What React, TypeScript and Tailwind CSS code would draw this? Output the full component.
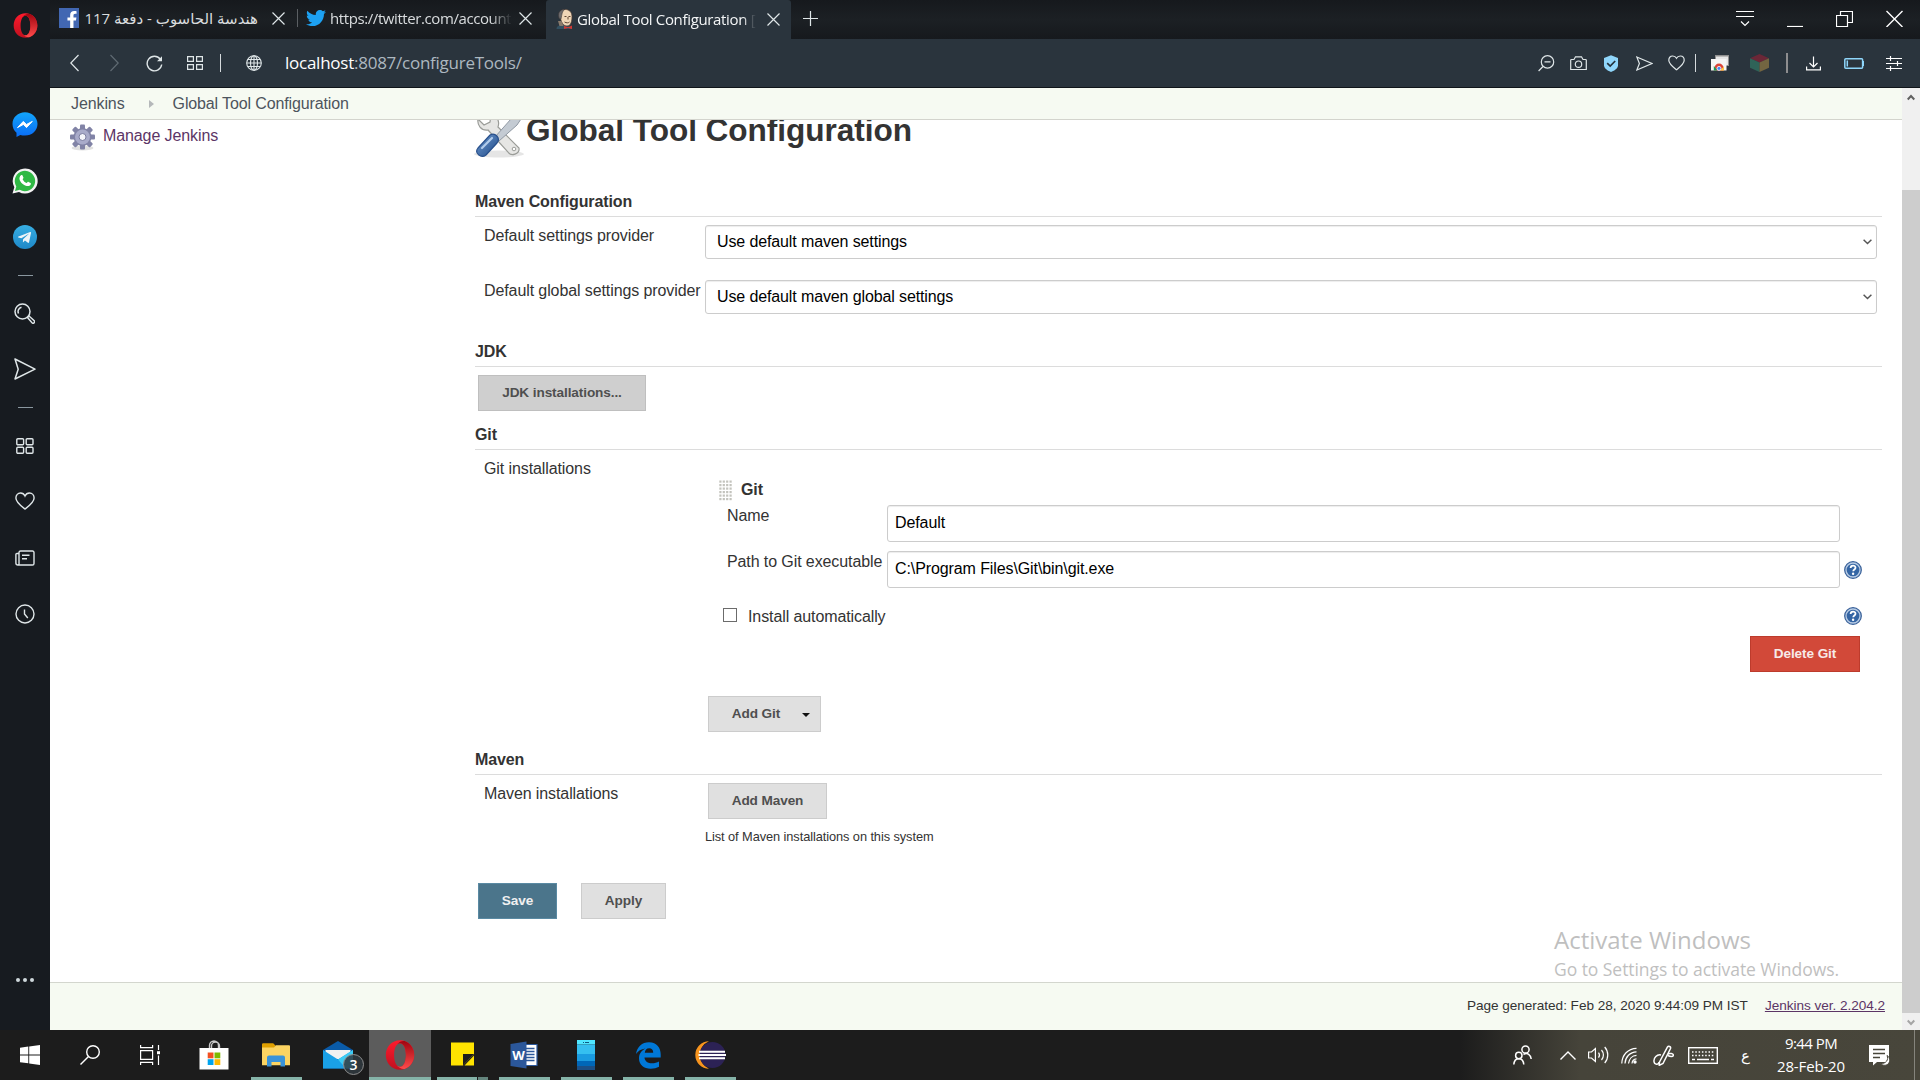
import React from "react";
import { FaTwitter, FaFacebookF, FaTelegramPlane } from "react-icons/fa";

type SvgProps = {
  w: number;
  h: number;
  className?: string;
  stroke?: string;
  sw?: number;
  children: React.ReactNode;
};

/* Line-icon frame: one viewBox unit equals one pixel. */
function Svg({ w, h, className = "", stroke = "#dfe6e8", sw = 1.2, children }: SvgProps) {
  return (
    <svg
      width={w}
      height={h}
      viewBox={`0 0 ${w} ${h}`}
      fill="none"
      stroke={stroke}
      strokeWidth={sw}
      className={`block shrink-0 ${className}`}
    >
      {children}
    </svg>
  );
}

function OperaLogo({ size, id }: { size: number; id: string }) {
  return (
    <svg width={size} height={size} viewBox="0 0 30 30" className="block shrink-0">
      <defs>
        <linearGradient id={`${id}-a`} x1="0" y1="0" x2="0" y2="1">
          <stop offset="0" stopColor="#ff1b2d" />
          <stop offset="1" stopColor="#c0101f" />
        </linearGradient>
        <linearGradient id={`${id}-b`} x1="0" y1="0" x2="0" y2="1">
          <stop offset="0" stopColor="#a0040f" />
          <stop offset="1" stopColor="#ff4b4b" />
        </linearGradient>
      </defs>
      <path
        fill={`url(#${id}-a)`}
        fillRule="evenodd"
        d="M15 0.3C6.8 0.3 0.8 6.8 0.8 15S6.8 29.7 15 29.7 29.2 23.2 29.2 15 23.2 0.3 15 0.3ZM15 3.2c3.6 0 5.9 5 5.9 11.8S18.6 26.8 15 26.8 9.1 21.8 9.1 15 11.400 3.200 15 3.200Z"
      />
      <path
        fill={`url(#${id}-b)`}
        d="M12 4.200c1-.8 2-1 3-1 3.600 0 5.900 5 5.900 11.800S18.600 26.800 15 26.800c-1 0-2-.3-3-1 2.200 2.200 4.800 3.500 7.600 3.200 5.500-1.900 9.600-7.400 9.600-14S25.100 2.900 19.600 1c-2.800-.3-5.400 1-7.600 3.200Z"
      />
    </svg>
  );
}

function CloseX({ className = "" }: { className?: string }) {
  return (
    <Svg w={13} h={13} className={className}>
      <path d="M.5.5l12 12M12.500.5l-12 12" />
    </Svg>
  );
}

function TabStrip() {
  return (
    <div className="flex h-[39px] shrink-0 items-start bg-gradient-to-b from-[#16191d] via-[#1c2024] to-[#16191d] text-[15px] leading-5 text-[#d9dcde]">
      <div className="flex h-8 w-[247px] items-center pt-1 pl-[9px]">
        <span className="flex h-5 w-5 items-end justify-center bg-[#4267b2]">
          <FaFacebookF size={17} color="#fff" className="ml-1.5" />
        </span>
        <span dir="rtl" className="ml-1 w-[175px] whitespace-nowrap">
          هندسة الحاسوب - دفعة 117
        </span>
        <CloseX className="ml-[14px]" />
      </div>
      <div className="mt-[9px] h-[18px] w-px bg-[#5b5f63]" />
      <div className="flex h-8 w-[248px] items-center pt-1 pl-[8px]">
        <FaTwitter size={20} color="#1da1f2" className="shrink-0" />
        <span className="ml-1 w-[182px] overflow-hidden whitespace-nowrap tracking-[-0.41px] [mask-image:linear-gradient(90deg,#000_88%,transparent)]">
          https://twitter.com/account
        </span>
        <CloseX className="ml-[7px]" />
      </div>
      <div className="flex h-[39px] w-[245px] items-start rounded-t-[3px] bg-[#2a343d] pt-2 pl-[10px] text-[#f3f5f6]">
        <svg width="18" height="22" viewBox="0 0 18 22" className="block shrink-0">
          <path d="M.5 21c0-3 3-4 5.500-4l6 .5 4.500 3.500Z" fill="#335061" />
          <path d="M4 8C3 3 6 1.500 9.500 1.500S16 4 16 8.500 15 18 11 18 5 14 4 8Z" fill="#f0d6b7" stroke="#4a3a30" strokeWidth=".7" />
          <path d="M3.500 11C1 6 3 1.500 9 1.200 6 3 6 6 5 11Z" fill="#6d6b6d" stroke="#3a3636" strokeWidth=".6" />
          <path d="M2 13h3.500l2 5H3.500Z" fill="#8a7a6c" />
          <path d="M8.500 8.500h2M12.500 8.500h2M12 9v2.500M8.500 14c2 1.200 4 1 5 0" stroke="#5c4433" fill="none" />
          <path d="M8 18l4 1.200L16 17.500v3.500l-4-1-4 1Z" fill="#d33833" />
        </svg>
        <span className="ml-[3px] w-[180px] overflow-hidden whitespace-nowrap pt-[0.500px] tracking-[-0.34px] [mask-image:linear-gradient(90deg,#000_92%,transparent_100%)]">
          Global Tool Configuration <span className="opacity-60">[</span>
        </span>
        <CloseX className="mt-[5px] ml-[10px]" />
      </div>
      <Svg w={15} h={15} className="mt-[11px] ml-3">
        <path d="M7.500 0v15M0 7.500h15" />
      </Svg>
      <div className="mt-[10px] mr-[17px] ml-auto flex items-start">
        <Svg w={18} h={17} stroke="#fff">
          <path d="M0 1.500h18M0 6.500h18M5 11.500l4 4 4-4" />
        </Svg>
        <Svg w={16} h={17} stroke="#fff" className="ml-[33px]">
          <path d="M0 16.500h16" />
        </Svg>
        <Svg w={17} h={17} stroke="#fff" className="ml-[33px]">
          <path d="M.5 5.500h11v11H.5ZM4.500 5.500V1.500h12v11h-5" />
        </Svg>
        <Svg w={17} h={17} stroke="#fff" className="ml-[33px]" sw={1.400}>
          <path d="M.5 1l16 16M16.500 1l-16 16" />
        </Svg>
      </div>
    </div>
  );
}

function Toolbar() {
  return (
    <div className="flex h-[49px] shrink-0 items-center border-b border-[#10151a] bg-[#2a343d]">
      <Svg w={9} h={18} className="ml-5">
        <path d="M8.500 1L.8 9l7.700 8" />
      </Svg>
      <Svg w={9} h={18} className="ml-[31px]" stroke="#5f6a72">
        <path d="M.5 1l7.700 8L.5 17" />
      </Svg>
      <Svg w={17} h={17} className="ml-[27px]" sw={1.400}>
        <path d="M14.200 4A7.300 7.300 0 1 0 15.700 9.500" />
        <path d="M16 1.200v5h-5Z" fill="#dfe6e8" stroke="none" />
      </Svg>
      <Svg w={16} h={14} className="ml-[24px]">
        <path d="M.6.6h5.800v4.800H.6ZM9.600.6h5.800v4.800H9.600ZM.6 8.600h5.800v4.800H.6ZM9.600 8.600h5.800v4.800H9.600Z" />
      </Svg>
      <div className="ml-[17px] h-[18px] w-px bg-[#d5dadd]" />
      <Svg w={16} h={16} className="ml-[25px]" sw={1.100}>
        <circle cx="8" cy="8" r="7.300" />
        <ellipse cx="8" cy="8" rx="3.500" ry="7.300" />
        <path d="M.7 8h14.600M1.800 4.500h12.400M1.800 11.500h12.400M8 .7v14.600" />
      </Svg>
      <div className="ml-[23px] text-[17px] tracking-[-0.25px] whitespace-nowrap text-[#adb8c0]">
        <span className="text-white">localhost</span>:8087/configureTools/
      </div>
      <div className="mr-[18px] ml-auto flex items-center">
        <Svg w={17} h={17}>
          <circle cx="9.500" cy="6.900" r="6.200" />
          <path d="M6.500 6.900h6M5 11.500L.6 16" />
        </Svg>
        <Svg w={17} h={15} className="ml-[15px]">
          <path d="M1.500 3.500H4l1.500-2.700h6L13 3.500h2.500a.8.8 0 0 1 .8.8v9.200H.7V4.300a.8.800 0 0 1 .8-.8Z" />
          <circle cx="8.500" cy="8.200" r="3.200" />
        </Svg>
        <Svg w={14} h={17} className="ml-[17px]" stroke="none">
          <path d="M7 .3L14 3v7.500c0 3-4.500 5.700-7 6.500-2.500-.8-7-3.500-7-6.500V3Z" fill="#8fd6fb" />
          <path d="M3.200 8.200L6.200 11l5-5" stroke="#22303a" strokeWidth="1.700" />
        </Svg>
        <Svg w={17} h={15} className="ml-[18px]">
          <path d="M.8 1l15.200 6.500L.8 14l2.600-6.500Z" />
        </Svg>
        <Svg w={17} h={16} className="ml-[15px]">
          <path d="M8.500 14.800C5 12 .8 8.800.8 5.200.8 2.600 2.500 1 4.700 1c1.600 0 3 .8 3.800 2.300C9.300 1.800 10.700 1 12.300 1c2.200 0 3.900 1.600 3.900 4.200 0 3.600-4.200 6.800-7.700 9.600Z" />
        </Svg>
        <div className="ml-[10px] h-[18px] w-px bg-[#d5dadd]" />
        <Svg w={18} h={16} className="ml-[15px]" stroke="none">
          <path d="M4 0h14v11h-3V4H4Z" fill="#8f8f8f" />
          <path d="M5 1.500h12v8.500h-2V4H5Z" fill="#e6e6e6" />
          <path d="M0 4h15.500v11.500H0Z" fill="#f4f4f4" />
          <path d="M3.300 13.200a4.700 4.700 0 0 1 9.400 0v2.300H3.300Z" fill="#db4437" />
          <path d="M2.800 11l3.500 4.500H2.800Z" fill="#0f9d58" />
          <path d="M12.900 11.500v4H9Z" fill="#ffcd40" />
          <circle cx="8" cy="13.400" r="2" fill="#4285f4" stroke="#fff" strokeWidth=".8" />
        </Svg>
        <Svg w={19} h={18} className="ml-[21px]" stroke="none">
          <path d="M9.500 0L19 4.200 9.500 8.500 0 4.200Z" fill="#6b2737" />
          <path d="M0 4.200l9.500 4.300V18L0 13.800Z" fill="#2f6358" />
          <path d="M19 4.200L9.500 8.500V18l9.500-4.200Z" fill="#736541" />
        </Svg>
        <div className="ml-[17px] h-5 w-0.5 bg-[#8d8d8f]" />
        <Svg w={15} h={15} className="ml-[18px]" stroke="#fff">
          <path d="M7.500.5v10M3.500 7l4 4 4-4M.6 10.500v3.400h13.800v-3.400" />
        </Svg>
        <Svg w={20} h={11} className="ml-[23px]" stroke="#8fd6fb" sw={1.500}>
          <rect x=".8" y=".8" width="17.800" height="9.400" rx="1" />
          <path d="M3.300 2.500v6M19.300 3v5" />
        </Svg>
        <Svg w={16} h={15} className="ml-[22px]" stroke="#fff">
          <path d="M0 2.500h16M0 7.500h16M0 12.500h16M4.500 0v5M11.500 5v5M4.500 10v5" />
        </Svg>
      </div>
    </div>
  );
}

function OperaSidebar() {
  return (
    <aside className="flex w-[50px] shrink-0 flex-col items-center bg-[#171b20]">
      <div className="mt-[13px]">
        <OperaLogo size={25} id="side" />
      </div>
      <svg width="26" height="26" viewBox="0 0 26 26" className="mt-[74px] block">
        <defs>
          <linearGradient id="msg" x1="0" y1="0" x2="0" y2="1">
            <stop offset="0" stopColor="#12a5fb" />
            <stop offset="1" stopColor="#0a6cf5" />
          </linearGradient>
        </defs>
        <path d="M13 .3C5.900.3.500 5.400.500 12c0 3.600 1.500 6.700 4 8.800V25l3.800-2c1.500.4 3 .6 4.700.6 7.100 0 12.500-5.100 12.500-11.600S20.100.3 13 .3Z" fill="url(#msg)" />
        <path d="M5.500 15.600L11.300 9.400l3.100 3.100 5.900-3.100-5.800 6.200-3.100-3.200Z" fill="#fff" stroke="#fff" strokeWidth="1" />
      </svg>
      <svg width="26" height="26" viewBox="0 0 26 26" className="mt-[30px] block">
        <path d="M.5 25.600l1.800-6.400A12.500 12.500 0 1 1 7 23.900Z" fill="#f3f3f3" />
        <path d="M3 23l1.300-4.600A10.200 10.200 0 1 1 7.800 21.800Z" fill="#2fb944" />
        <path d="M9 7.300c.5-.4 1.200-.4 1.500.2l.9 2c.2.4 0 .8-.8 1.700 1 2 2.300 3.100 4.200 3.900.9-1.200 1.200-1.400 1.700-1.200l2 1c.5.300.5.700.2 1.500-.5 1.400-2.600 2-4 1.600-4.400-1.200-6.200-3.900-7-5.900-.7-2 .1-4 1.300-4.800Z" fill="#fff" />
      </svg>
      <div className="mt-[31px] flex h-6 w-6 items-center justify-center rounded-full bg-gradient-to-b from-[#37aee2] to-[#1e88c8]">
        <FaTelegramPlane size={15} color="#eef4f8" className="mr-0.5" />
      </div>
      <div className="mt-[26px] h-px w-[15px] bg-[#8a979f]" />
      <Svg w={21} h={21} className="mt-[27px] mr-px" sw={1.500}>
        <circle cx="8.500" cy="8.500" r="7.500" />
        <path d="M4.500 10.500a4.500 4.500 0 0 1 3-6.300M13.500 14.500l1.500-1.500 5 4.500a1.500 1.500 0 0 1-2 2.300Z" />
      </Svg>
      <Svg w={22} h={22} className="mt-[34px]" sw={1.500}>
        <path d="M1 1l20 10.200L1 21l3.200-9.800Z" strokeLinejoin="round" />
      </Svg>
      <div className="mt-[27px] h-px w-[15px] bg-[#8a979f]" />
      <Svg w={18} h={16} className="mt-[30px] mr-px" sw={1.400}>
        <rect x=".8" y=".8" width="6.800" height="6" rx="1" />
        <rect x="10.200" y=".8" width="6.800" height="6" rx="1" />
        <rect x=".8" y="9.200" width="6.800" height="6" rx="1" />
        <rect x="10.200" y="9.200" width="6.800" height="6" rx="1" />
      </Svg>
      <Svg w={20} h={18} className="mt-[38px] mr-px" sw={1.400}>
        <path d="M10 17C6 14 .9 10.400.9 6 .9 3 2.900 1 5.500 1 7.400 1 9.100 2 10 4c.9-2 2.600-3 4.500-3C17.100 1 19.100 3 19.100 6c0 4.400-5.100 8-9.100 11Z" />
      </Svg>
      <Svg w={20} h={16} className="mt-[40px] mr-px" sw={1.400}>
        <path d="M4 3.500H2A1 1 0 0 0 .9 4.500V13a2 2 0 0 0 2 2h14.500a1.600 1.600 0 0 0 1.600-1.600V2.500A1.500 1.500 0 0 0 17.500 1H5.500A1.500 1.500 0 0 0 4 2.500V13a1.500 1.500 0 0 1-1.500 2M7 5.200h7.500M7 8.800h5" />
      </Svg>
      <Svg w={20} h={20} className="mt-[38px] mr-px" sw={1.400}>
        <circle cx="10" cy="10" r="9" />
        <path d="M9.500 5.500V10l3.300 4" />
      </Svg>
      <div className="mt-[354px] flex gap-[3px]">
        <i className="h-1 w-1 rounded-full bg-[#cfd8dc]" />
        <i className="h-1 w-1 rounded-full bg-[#cfd8dc]" />
        <i className="h-1 w-1 rounded-full bg-[#cfd8dc]" />
      </div>
    </aside>
  );
}

function SectionHead({ children }: { children: React.ReactNode }) {
  return (
    <h2 className="h-7 shrink-0 border-b border-[#dcdcdc] pt-px text-[16px] leading-6 font-bold tracking-[-0.1px] text-[#333]">
      {children}
    </h2>
  );
}

function Select({ label, value }: { label: string; value: string }) {
  return (
    <div className="flex h-[55px] items-start pl-[9px]">
      <span className="mt-[7px] w-[221px] shrink-0 whitespace-nowrap">{label}</span>
      <div className="mt-2 mr-[5px] flex h-[34px] flex-1 items-center justify-between rounded-[3px] border border-[#ccc] bg-white pr-1 pl-[11px] tracking-[-0.12px] text-black shadow-[inset_0_1px_1px_rgba(0,0,0,0.075)]">
        <span>{value}</span>
        <svg width="9" height="6" viewBox="0 0 9 6" fill="none" stroke="#555" strokeWidth="1.500">
          <path d="M.6.8l3.900 3.700L8.400.8" />
        </svg>
      </div>
    </div>
  );
}

function Button({ children, className }: { children: React.ReactNode; className: string }) {
  return (
    <button className={`flex h-9 shrink-0 items-center justify-center border text-[13.600px] leading-5 font-bold whitespace-nowrap ${className}`}>
      {children}
    </button>
  );
}

function Help() {
  return (
    <svg width="18" height="18" viewBox="0 0 18 18" className="block shrink-0">
      <circle cx="9" cy="9" r="8.300" fill="#3465a4" stroke="#3a6199" strokeWidth="1.200" />
      <circle cx="9" cy="9" r="7" fill="#3465a4" stroke="#b9cce4" strokeWidth="1.300" />
      <path d="M6.600 7c0-3.200 4.900-3.100 4.900-.3 0 1.700-2.200 1.800-2.300 3.500" fill="none" stroke="#fff" strokeWidth="1.800" />
      <circle cx="9.100" cy="12.700" r="1.200" fill="#fff" />
    </svg>
  );
}

function TextField({ label, value, help }: { label: string; value: string; help?: boolean }) {
  return (
    <div className="flex h-[46px] items-start pl-[22px]">
      <span className="mt-px w-[160px] shrink-0 whitespace-nowrap">{label}</span>
      <div className="mt-0.5 flex h-[37px] w-[953px] items-center rounded-[3px] border border-[#ccc] bg-white pb-0.5 pl-[7px] text-black shadow-[inset_0_1px_1px_rgba(0,0,0,0.075)]">
        {value}
      </div>
      <span className="mt-3 ml-1">{help && <Help />}</span>
    </div>
  );
}

function ToolsIcon() {
  return (
    <svg width="52" height="48" viewBox="0 0 52 48" className="-mt-[10px] -ml-0.5 block shrink-0">
      <defs>
        <linearGradient id="handle" x1="0" y1="0" x2="1" y2="1">
          <stop offset="0" stopColor="#6f9bd1" />
          <stop offset="1" stopColor="#204a87" />
        </linearGradient>
      </defs>
      <ellipse cx="26" cy="44" rx="25" ry="3.500" fill="#000" opacity=".1" />
      <path
        d="M5 9c-1 6 3 12 10 11l20 22c3 5 12 2 11-4L25 17c2-6-1-11-7-13l-1 8-6 3-5-5Z"
        fill="#e6e6e4"
        stroke="#9a9c98"
        strokeWidth="1.200"
      />
      <circle cx="41" cy="39" r="1.800" fill="#fff" stroke="#9a9c98" />
      <path d="M44 5l4 4-4 6-18 16-4-4 16-18Z" fill="#c4cbd3" stroke="#8f98a3" strokeWidth="1" />
      <path d="M5 38l12-13c5-3 11 3 7 8L13 45c-5 4-12-2-8-7Z" fill="url(#handle)" stroke="#28508c" strokeWidth="1.200" />
      <path d="M9 38l10-10" stroke="#b3cdec" strokeWidth="2.200" strokeLinecap="round" />
    </svg>
  );
}

function Gear() {
  return (
    <svg width="27" height="27" viewBox="0 0 27 27" className="block shrink-0">
      <ellipse cx="13.500" cy="24" rx="11" ry="2.500" fill="#000" opacity=".12" />
      <g fill="#8183a6">
        {[0, 45, 90, 135].map((a) => (
          <rect key={a} x="11" y="0.500" width="5" height="25" rx="1" transform={`rotate(${a} 13.500 13)`} />
        ))}
        <circle cx="13.500" cy="13" r="9" />
      </g>
      <circle cx="13.500" cy="13" r="7.500" fill="#a9abca" />
      <circle cx="13.500" cy="13" r="3.500" fill="#f5f5fa" stroke="#7b7da0" />
    </svg>
  );
}

function Page() {
  return (
    <div className="flex min-h-0 flex-1 flex-col font-['Liberation_Sans',Arial,sans-serif] text-[16px] leading-6 tracking-[-0.1px] text-[#333]">
      <div className="flex h-8 shrink-0 items-center border-b border-[#d3d4cd] bg-[#f6faf2] pl-[21px] text-[#4d545d]">
        <span>Jenkins</span>
        <svg width="5" height="8" viewBox="0 0 5 8" className="ml-[24px] block">
          <path d="M0 0l5 4-5 4Z" fill="#b5b8ba" />
        </svg>
        <span className="ml-[19px] tracking-[-0.13px]">Global Tool Configuration</span>
      </div>
      <div className="flex min-h-0 flex-1 overflow-hidden bg-white">
        <div className="flex w-[425px] shrink-0 items-start pt-1 pl-[19px]">
          <Gear />
          <a className="ml-[7px] text-[#5c3566]">Manage Jenkins</a>
        </div>
        <main className="flex w-[1407px] shrink-0 flex-col">
          <div className="flex h-[69px] shrink-0 items-start">
            <ToolsIcon />
            <h1 className="-mt-[10px] ml-px text-[31.600px] leading-[40px] font-bold tracking-[-0.05px] whitespace-nowrap">
              Global Tool Configuration
            </h1>
          </div>

          <SectionHead>Maven Configuration</SectionHead>
          <div className="h-[122px] shrink-0">
            <Select label="Default settings provider" value="Use default maven settings" />
            <Select label="Default global settings provider" value="Use default maven global settings" />
          </div>

          <SectionHead>JDK</SectionHead>
          <div className="h-[55px] shrink-0 pt-2 pl-[3px]">
            <Button className="w-[168px] border-[#bfbfbf] bg-[#cfcfcf] text-[#4f4f4f]">JDK installations...</Button>
          </div>

          <SectionHead>Git</SectionHead>
          <div className="flex h-[297px] shrink-0 pl-[9px]">
            <span className="mt-[7px] w-[221px] shrink-0">Git installations</span>
            <div className="flex flex-1 flex-col pt-[27px]">
              <div className="flex h-6 shrink-0 items-start pl-[14px]">
                <svg width="14" height="21" viewBox="0 0 14 21" className="mt-[3px] block">
                  {[0, 1, 2, 3, 4, 5].map((r) =>
                    [0, 1, 2, 3].map((c) => (
                      <rect key={`${r}-${c}`} x={c * 3.4 + 0.3} y={r * 3.5 + 0.5} width="2.200" height="2.200" fill="#c3c3bd" />
                    )),
                  )}
                </svg>
                <b className="mt-px ml-2">Git</b>
              </div>
              <div className="mt-0.5 shrink-0">
                <TextField label="Name" value="Default" />
                <TextField label="Path to Git executable" value="C:\Program Files\Git\bin\git.exe" help />
              </div>
              <div className="mt-[9px] flex h-[32px] shrink-0 items-start pl-[18px]">
                <span className="mt-[4px] h-[14px] w-[14px] border border-[#6b6b6b] bg-white" />
                <span className="mt-px ml-[11px]">Install automatically</span>
                <span className="mt-[3px] mr-[20px] ml-auto">
                  <Help />
                </span>
              </div>
              <div className="flex shrink-0 justify-end pr-[22px]">
                <Button className="w-[110px] border-[#bd3b2c] bg-[#d24939] text-[#f7eae8]">Delete Git</Button>
              </div>
              <div className="mt-6 shrink-0 pl-[3px]">
                <Button className="w-[113px] border-[#ccc] bg-[#e0e0e0] text-[#4f4f4f]">
                  Add Git
                  <svg width="8" height="4" viewBox="0 0 8 4" className="mt-px -mr-[13px] ml-[22px] block">
                    <path d="M0 0h8L4 4Z" fill="#111" />
                  </svg>
                </Button>
              </div>
            </div>
          </div>

          <SectionHead>Maven</SectionHead>
          <div className="flex h-[108px] shrink-0 pl-[9px]">
            <span className="mt-[7px] w-[221px] shrink-0">Maven installations</span>
            <div className="flex flex-col pt-2">
              <Button className="ml-[3px] w-[119px] border-[#ccc] bg-[#e0e0e0] text-[#4f4f4f]">Add Maven</Button>
              <span className="mt-[8px] text-[12.800px] leading-5 tracking-[-0.08px]">List of Maven installations on this system</span>
            </div>
          </div>

          <div className="flex shrink-0 pl-[3px]">
            <Button className="w-[79px] border-[#5a8aa3] bg-[#4b758b] text-[#f0f0f0]">Save</Button>
            <Button className="ml-6 w-[85px] border-[#ccc] bg-[#e0e0e0] text-[#4f4f4f]">Apply</Button>
          </div>

          {/* system watermark, drawn just above the footer */}
          <div className="mt-auto ml-[1079px] font-['Open_Sans','Noto_Sans',sans-serif] whitespace-nowrap text-[#bfbfbf]">
            <div className="text-[24px] leading-8 tracking-normal">Activate Windows</div>
            <div className="text-[17.500px] leading-[26px] tracking-[-0.05px]">Go to Settings to activate Windows.</div>
          </div>
        </main>
      </div>
      <footer className="flex h-12 shrink-0 items-center justify-end border-t border-[#d3d6ce] bg-[#f6faf2] pr-[17px] pb-0.5 text-[13.600px] tracking-[-0.04px]">
        <span>Page generated: Feb 28, 2020 9:44:09 PM IST</span>
        <a className="ml-[17px] text-[#5c3566] underline">Jenkins ver. 2.204.2</a>
      </footer>
    </div>
  );
}

function Scrollbar() {
  return (
    <div className="flex w-[18px] shrink-0 flex-col items-center bg-[#f0f0f0]">
      <svg width="8" height="7" viewBox="0 0 8 7" className="mt-[6px] block" fill="none" stroke="#606060" strokeWidth="2">
        <path d="M.7 5.500L4 2l3.300 3.500" />
      </svg>
      <div className="mt-[89px] h-[823px] w-full bg-[#cdcdcd]" />
      <svg width="8" height="7" viewBox="0 0 8 7" className="mt-[6px] block" fill="none" stroke="#a5a5a5" strokeWidth="2">
        <path d="M.7 1.500L4 5l3.300-3.500" />
      </svg>
    </div>
  );
}

function TaskItem({ children, active, running = true }: { children: React.ReactNode; active?: boolean; running?: boolean }) {
  return (
    <div className={`flex h-[50px] w-[62px] shrink-0 flex-col items-center ${active ? "bg-[#5c5c5c]" : ""}`}>
      <div className="flex h-[47px] items-center pt-[3px]">{children}</div>
      {running && <div className={`h-[3px] bg-[#85b3a8] ${active ? "w-full" : "w-[51px]"}`} />}
    </div>
  );
}

function Taskbar() {
  return (
    <div className="flex h-[50px] shrink-0 items-center bg-[linear-gradient(90deg,#1c1c1c_0,#1c1c1c_1460px,#46443a_1580px,#48463b_100%)] text-white">
      <svg width="20" height="20" viewBox="0 0 20 20" className="ml-5 block shrink-0" fill="#fff">
        <path d="M0 2.800L8.300 1.600V9.500H0ZM9.200 1.500L20 0v9.500H9.200ZM0 10.400h8.300v7.900L0 17.200ZM9.200 10.400H20V20L9.200 18.500Z" />
      </svg>
      <Svg w={20} h={20} className="ml-10" stroke="#fff" sw={1.400}>
        <circle cx="13" cy="7" r="6.300" />
        <path d="M8.500 11.500L.5 19.500" />
      </Svg>
      <Svg w={20} h={20} className="ml-10" stroke="#fff" sw={1.200}>
        <path d="M.6 0v2.700h12V0M.6 20v-2.700h12V20M.6 5.600h12v8.800H.6ZM18.500 0v5M18.500 10.500V20" />
        <path d="M17 6.200h3v3h-3Z" fill="#fff" stroke="none" />
      </Svg>
      <div className="w-[23px] shrink-0" />
      <TaskItem running={false}>
        <svg width="30" height="30" viewBox="0 0 30 30">
          <path d="M10.500 9V5.500a4.500 4.500 0 0 1 9 0V9M12.500 9V6a4 4 0 0 1 8 0v3" fill="none" stroke="#c9c9c9" strokeWidth="1.400" />
          <path d="M.5 8h29v21.500H.5Z" fill="#fff" />
          <path d="M8.700 12.500h5.800v5.800H8.700Z" fill="#f25022" />
          <path d="M15.500 12.500h5.800v5.800h-5.800Z" fill="#7fba00" />
          <path d="M8.700 19.200h5.800V25H8.700Z" fill="#00a4ef" />
          <path d="M15.500 19.200h5.800V25h-5.800Z" fill="#ffb900" />
        </svg>
      </TaskItem>
      <TaskItem>
        <svg width="28" height="24" viewBox="0 0 28 24">
          <path d="M0 1.500A1.200 1.200 0 0 1 1.200.3h10l2.500 2.500V5H0Z" fill="#e0a000" />
          <path d="M0 4.500h12l2-2.200h13a1 1 0 0 1 1 1v19H0Z" fill="#fcd462" />
          <path d="M5 23.500v-9a2 2 0 0 1 2-2h14a2 2 0 0 1 2 2v9h-4.500v-4.500h-9v4.500Z" fill="#3a93d8" />
        </svg>
      </TaskItem>
      <TaskItem running={false}>
        <div className="relative h-[30px] w-[30px]">
          <svg width="30" height="30" viewBox="0 0 30 30">
            <path d="M15 1l15 9v18.500H0V10Z" fill="#0a5ba8" />
            <path d="M2.500 10h25v9h-25Z" fill="#f1f1f1" />
            <path d="M0 10l15 9.500L30 10v18.500H0Z" fill="#1aa0e6" />
            <path d="M30 10L15 19.500l8 9h7Z" fill="#3ccbf4" />
          </svg>
          <span className="absolute top-[14px] left-5 flex h-[21px] w-[21px] items-center justify-center rounded-full border border-[#8d8d8d] bg-[#303a40]/85 text-[14px] leading-none font-semibold">
            3
          </span>
        </div>
      </TaskItem>
      <TaskItem active>
        <OperaLogo size={30} id="bar" />
      </TaskItem>
      <div className="flex h-[50px] w-[62px] shrink-0 flex-col items-center">
        <div className="flex h-[47px] items-center pt-[1px]">
          <svg width="23" height="24" viewBox="0 0 23 24">
            <path d="M0 .5h23V12L12 23.500H0Z" fill="#ffe300" />
            <path d="M12 23.500V12h11Z" fill="#1d1d1d" />
            <path d="M13.500 23.500H23V13.500Z" fill="#ffe300" />
          </svg>
        </div>
        <div className="flex h-[3px] w-[51px]">
          <div className="w-10 bg-[#85b3a8]" />
          <div className="ml-px flex-1 bg-[#64857d]" />
        </div>
      </div>
      <TaskItem>
        <svg width="28" height="28" viewBox="0 0 28 28">
          <path d="M14 3.500h13v21H14Z" fill="#fff" stroke="#2b579a" strokeWidth="1.200" />
          <path d="M15 7.500h9.500M15 10.500h9.500M15 13.500h9.500M15 16.500h9.500M15 19.500h9.500" stroke="#2b579a" strokeWidth="1.400" />
          <path d="M.5 3L16.500.5v27L.5 25Z" fill="#2b579a" />
          <text x="2.300" y="18.500" fontFamily="Open Sans, sans-serif" fontSize="13" fontWeight="700" fill="#fff">W</text>
        </svg>
      </TaskItem>
      <TaskItem>
        <svg width="18" height="30" viewBox="0 0 18 30">
          <path d="M0 0h18v4.500H0Z" fill="#50e6ff" />
          <path d="M0 4.500h18V14H0Z" fill="#35bff0" />
          <path d="M0 14h18v7H0Z" fill="#1a9be0" />
          <path d="M0 21h18v5H0Z" fill="#0067b8" />
          <path d="M0 26h18v4H0Z" fill="#1b4f86" />
          <path d="M6 2.500h1M8 2.500h4" stroke="#0b5a84" />
        </svg>
      </TaskItem>
      <TaskItem>
        <svg width="25" height="27" viewBox="0 0 25 27">
          <path
            d="M0 12C1 5 6 .3 13 .3c8 0 11.700 5.700 11.700 12v3.200H8.500c.3 4 3.500 5.800 7.500 5.800 2.700 0 5-.7 7-1.800v5.300c-2.300 1.300-5 2-8.300 2C8 26.800 3 23 3 16.300c0-4.500 2.500-8 6.500-9.800C5 7 2 9 0 12ZM8.800 10.800h8.400c0-3-1.400-4.600-4-4.600-2.700 0-4.200 2-4.400 4.600Z"
            fill="#0078d7"
            fillRule="evenodd"
          />
        </svg>
      </TaskItem>
      <TaskItem>
        <svg width="31" height="28" viewBox="0 0 31 28">
          <path d="M14 .3A13.700 13.700 0 0 0 14 27.700 15 15 0 0 1 14 .3Z" fill="#f7941e" />
          <circle cx="17.500" cy="14" r="13" fill="#2c2255" />
          <path d="M4 10.700h26M3.500 14h27.500M4 17.300h26" stroke="#fff" strokeWidth="1.900" />
        </svg>
      </TaskItem>

      <div className="ml-auto flex h-[50px] items-center">
        <Svg w={19} h={20} stroke="#fff" sw={1.500}>
          <circle cx="12.500" cy="4.500" r="3.600" />
          <circle cx="5.800" cy="10.500" r="3.200" />
          <path d="M.8 19.500c.3-3.500 2.200-5.800 5-5.800s4.700 2.300 5 5.800M10.500 9.500c4-2.500 7.300.5 7.700 4.500" />
        </Svg>
        <Svg w={16} h={9} className="ml-[28px]" stroke="#fff" sw={1.400}>
          <path d="M.5 8.500L8 1l7.500 7.500" />
        </Svg>
        <Svg w={21} h={18} className="ml-[12px]" stroke="#fff" sw={1.200}>
          <path d="M.6 6h2.900L7.400 2.500v13L3.500 12H.6ZM10.500 6.500a4 4 0 0 1 0 5M13.500 4a7.500 7.500 0 0 1 0 10M16.700 1a12 12 0 0 1 0 16" />
        </Svg>
        <Svg w={16} h={17} className="ml-[12px]" stroke="#fff" sw={1.200}>
          <path d="M.8 16.500C1 8 7 1.500 15.500 1.300M4 16.500C4.300 10 9 5 15.500 4.800M7.500 16.500C8 12 11 8.500 15.500 8.300" />
          <circle cx="14" cy="15" r="1.700" fill="#fff" stroke="none" />
          <path d="M11 16.500c.2-2.500 2-4.500 4.500-4.700" />
        </Svg>
        <Svg w={21} h={21} className="ml-[16px]" stroke="#fff" sw={1.500}>
          <path d="M6.500 17L14.500 2c1-1.500 3.700-.3 3 1.500L10 18.500l-3.700 1.800ZM8 10C4 9 .5 13 1 16.500s4.500 3.500 5 .5M14 9.500c3-2 6.500-1 6.300.8-.2 1.700-3.300 1.500-5.300.2" />
        </Svg>
        <Svg w={30} h={17} className="ml-[14px]" stroke="#fff" sw={1.400}>
          <rect x=".7" y=".7" width="28.600" height="15.600" />
          <path d="M4 5h22M4 8.500h22" strokeDasharray="1.500 1.800" />
          <path d="M4 12.500h3M9 12.500h12M23 12.500h3" />
        </Svg>
        <span className="mt-0.5 ml-[23px] w-[10px] font-['DejaVu_Sans',sans-serif] text-[15px] leading-5">ع</span>
        <div className="ml-[22px] flex w-[76px] flex-col items-center text-[15px] leading-[23px] whitespace-nowrap">
          <span className="tracking-[-0.55px]">9:44 PM</span>
          <span className="tracking-[-0.15px]">28-Feb-20</span>
        </div>
        <Svg w={21} h={21} className="ml-[20px]" stroke="none">
          <path d="M0 0h20v17H8l-4 3.500V17H0Z" fill="#fff" />
          <path d="M4 4.500h12M4 8.500h12M4 12.500h7" stroke="#48463b" strokeWidth="1.300" />
          <path d="M18 10.500c2 4-1 8.500-6.500 8 2 2.200 6 2.500 8 0 2-2.500 1.500-6.500-1.500-8Z" fill="#fff" stroke="#48463b" strokeWidth="1" />
        </Svg>
        <div className="ml-6 h-full w-px bg-[#85847c]" />
        <div className="w-[5px]" />
      </div>
    </div>
  );
}

export default function App() {
  return (
    <div className="flex h-[1080px] w-[1920px] flex-col overflow-hidden bg-white font-['Open_Sans','Noto_Sans','DejaVu_Sans',sans-serif]">
      <div className="flex min-h-0 flex-1">
        <OperaSidebar />
        <div className="flex min-w-0 flex-1 flex-col">
          <TabStrip />
          <Toolbar />
          <div className="flex min-h-0 flex-1">
            <Page />
            <Scrollbar />
          </div>
        </div>
      </div>
      <Taskbar />
    </div>
  );
}
